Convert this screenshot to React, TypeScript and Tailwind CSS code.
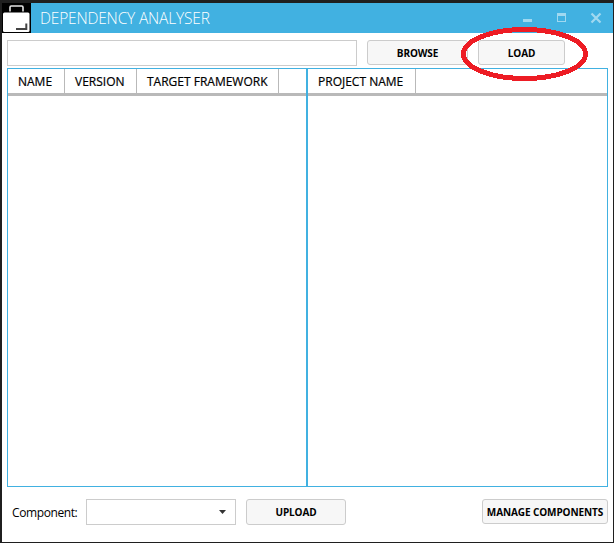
import type { ReactNode } from 'react';

function Column({ children, className }: { children: ReactNode; className: string }) {
  return (
    <div className={`h-6 shrink-0 border-r border-[#b9b9b9] pl-2.5 text-[12px] leading-[25px] font-medium whitespace-nowrap [-webkit-text-stroke:0.2px_black] ${className}`}>
      {children}
    </div>
  );
}

function Button({ children, className }: { children: ReactNode; className: string }) {
  return (
    <button
      className={`flex shrink-0 items-center justify-center rounded-[3px] border border-[#cccccc] bg-[#f7f7f7] text-[10px] font-bold tracking-[-0.1px] whitespace-nowrap ${className}`}
    >
      {children}
    </button>
  );
}

function BriefcaseIcon() {
  return (
    <svg className="h-[30px] w-[29px] shrink-0 bg-black" viewBox="0 0 29 30">
      <path d="M8 8.5V4.2Q8 3 9.2 3H19.8Q21 3 21 4.2V8.5" fill="none" stroke="#e4e4e4" strokeWidth="1.6" />
      <rect x="1" y="9.5" width="26.5" height="19.5" rx="1.5" fill="#fff" />
      <path d="M14 26H24.3V20.5" fill="none" stroke="#444" strokeWidth="2" />
    </svg>
  );
}

export default function App() {
  return (
    <div className="relative flex h-[543px] w-[614px] flex-col overflow-hidden border-t-[3px] border-r border-b border-l-2 border-[#1f1f1f] bg-white font-['Open_Sans','Noto_Sans',sans-serif] text-black">
      <header className="flex h-[30px] shrink-0 items-center bg-[#41b1e1]">
        <BriefcaseIcon />
        <h1 className="ml-[9px] text-[15.5px] leading-[30px] font-light tracking-[-0.17px] whitespace-nowrap text-white">DEPENDENCY ANALYSER</h1>
        <svg className="ml-auto h-[30px] w-[100px] shrink-0" viewBox="0 0 100 30" shapeRendering="crispEdges">
          <rect x="10" y="16" width="9" height="3" fill="#a0d8f0" />
          <path d="M44 10h9v9h-9zM45 13v5h7v-5z" fill="#a0d8f0" fillRule="evenodd" />
          <path d="M78.5 10.5l9 9M87.5 10.5l-9 9" stroke="#a0d8f0" strokeWidth="2.2" shapeRendering="auto" />
        </svg>
      </header>

      <div className="mt-[7px] flex h-[26px] shrink-0 items-start pl-[5px]">
        <input className="h-[26px] w-[350px] border border-[#cccccc] bg-white px-1 text-xs outline-none" />
        <Button className="ml-2.5 h-[25px] w-[101px] pt-0.5">BROWSE</Button>
        <Button className="ml-2.5 h-[25px] w-[87px] pt-0.5">LOAD</Button>
      </div>

      <main className="mt-0.5 mr-[5px] ml-[5px] flex h-[419px] shrink-0 border border-[#41b1e1]">
        <section className="w-[298px] shrink-0">
          <div className="flex h-[27px] border-b-[3px] border-[#b9b9b9]">
            <Column className="w-[57px]">NAME</Column>
            <Column className="w-[72px]">VERSION</Column>
            <Column className="w-[142px]">TARGET FRAMEWORK</Column>
          </div>
        </section>
        <div className="w-0.5 shrink-0 bg-[#41b1e1]" />
        <section className="flex-1">
          <div className="flex h-[27px] border-b-[3px] border-[#b9b9b9]">
            <Column className="w-[108px]">PROJECT NAME</Column>
          </div>
        </section>
      </main>

      <footer className="mt-3 flex h-[26px] shrink-0 items-start pr-[5px] pl-2.5">
        <label className="w-[74px] text-[12px] leading-[27px] tracking-[-0.4px]">Component:</label>
        <div className="flex h-[26px] w-[150px] items-center justify-end border border-[#cccccc] pr-[9px]">
          <svg className="h-1 w-[7px]" viewBox="0 0 7 4">
            <path d="M0 0h7L3.5 4z" fill="#333" />
          </svg>
        </div>
        <Button className="ml-2.5 h-[26px] w-[100px]">UPLOAD</Button>
        <Button className="ml-auto h-[25px] w-[126px] pt-0.5">MANAGE COMPONENTS</Button>
      </footer>

      <svg className="pointer-events-none absolute top-[23px] left-[458px] h-[60px] w-[132px]" viewBox="0 0 132 60" shapeRendering="crispEdges">
        <ellipse cx="64.5" cy="28" rx="61" ry="24.5" fill="none" stroke="#ed1c24" strokeWidth="5" />
      </svg>
    </div>
  );
}
